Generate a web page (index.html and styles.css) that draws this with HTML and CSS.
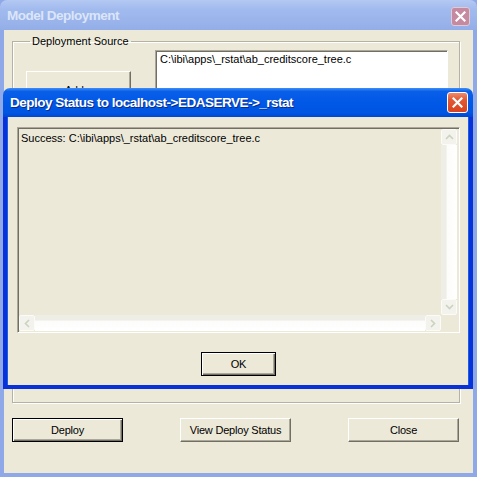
FILE: index.html
```html
<!DOCTYPE html>
<html lang="en">
	<head>
		<meta charset="UTF-8" />
		<title>Model Deployment</title>
		<link rel="stylesheet" href="styles.css">
	</head>
	<body>
		<div class="window">
			<div class="titlebar">
				<span class="title">Model Deployment</span>
				<span class="close-btn inactive">
					<svg width="11" height="11" viewBox="0 0 11 11"><path d="M1.5 1.5 L9.5 9.5 M9.5 1.5 L1.5 9.5" stroke="#fff" stroke-width="2.2" stroke-linecap="square"/></svg>
				</span>
			</div>
			<div class="client">
				<fieldset class="group">
					<legend>Deployment Source</legend>
					<div class="group-row">
						<button class="button add">Add...</button>
						<div class="path-box">C:\ibi\apps\_rstat\ab_creditscore_tree.c</div>
					</div>
				</fieldset>
				<div class="actions">
					<button class="button default">Deploy</button>
					<button class="button">View Deploy Status</button>
					<button class="button">Close</button>
				</div>
			</div>

			<div class="dialog">
				<div class="dialog-titlebar">
					<span class="dialog-title">Deploy Status to localhost-&gt;EDASERVE-&gt;_rstat</span>
					<span class="close-btn active">
						<svg width="11" height="11" viewBox="0 0 11 11"><path d="M1.5 1.5 L9.5 9.5 M9.5 1.5 L1.5 9.5" stroke="#fff" stroke-width="2.2" stroke-linecap="square"/></svg>
					</span>
				</div>
				<div class="dialog-body">
					<div class="status-box">
						<div class="status-text">Success: C:\ibi\apps\_rstat\ab_creditscore_tree.c</div>
						<div class="vscroll">
							<div class="arrow up">
								<svg width="9" height="6" viewBox="0 0 9 6"><path d="M1 5 L4.5 1.5 L8 5" fill="none" stroke="#c8d4bf" stroke-width="1.6"/></svg>
							</div>
							<div class="vtrack"></div>
							<div class="arrow down">
								<svg width="9" height="6" viewBox="0 0 9 6"><path d="M1 1 L4.5 4.5 L8 1" fill="none" stroke="#c8d4bf" stroke-width="1.6"/></svg>
							</div>
						</div>
						<div class="hscroll">
							<div class="arrow left">
								<svg width="6" height="9" viewBox="0 0 6 9"><path d="M5 1 L1.5 4.5 L5 8" fill="none" stroke="#c8d4bf" stroke-width="1.6"/></svg>
							</div>
							<div class="htrack"></div>
							<div class="arrow right">
								<svg width="6" height="9" viewBox="0 0 6 9"><path d="M1 1 L4.5 4.5 L1 8" fill="none" stroke="#c8d4bf" stroke-width="1.6"/></svg>
							</div>
						</div>
						<div class="corner"></div>
					</div>
					<div class="ok-row">
						<button class="button default ok">OK</button>
					</div>
				</div>
			</div>
		</div>
	</body>
</html>
```

FILE: styles.css
```css
body {
	margin: 0;
	width: 477px;
	height: 477px;
	overflow: hidden;
	font-family: "Liberation Sans", Arial, sans-serif;
	font-size: 11px;
	color: #000;
}
.window {
	position: relative;
	width: 477px;
	height: 477px;
	display: flex;
	flex-direction: column;
	background-color: #8ea8e8;
}
.titlebar {
	height: 30px;
	display: flex;
	align-items: center;
	justify-content: space-between;
	padding: 0 7px 0 7px;
	background: linear-gradient(#b4c9f3, #a2bbee 30%, #9ab4eb 70%, #93ade8);
	border-radius: 7px 7px 0 0;
}
.title {
	font-weight: bold;
	font-size: 13.5px;
	letter-spacing: -0.5px;
	color: #dbe5f8;
}
.close-btn {
	width: 21px;
	height: 21px;
	box-sizing: border-box;
	display: flex;
	align-items: center;
	justify-content: center;
	border-radius: 3px;
}
.close-btn.inactive {
	width: 19px;
	height: 19px;
	margin-top: 2px;
	background-color: #c58aa0;
	border: 1px solid #e2c9d6;
}
.close-btn.active {
	margin-right: -1px;
	background: linear-gradient(#ee8a6c, #e25a36 35%, #d9431d);
	border: 1px solid #fff;
}
.client {
	flex: 1;
	margin: 0 4px 4px 4px;
	padding: 5px 13px 0 8px;
	background-color: #ece9d8;
	display: flex;
	flex-direction: column;
}
.group {
	margin: 0;
	padding: 2px 11px 0 13px;
	height: 368px;
	box-sizing: border-box;
	border: 1px solid #b5b2a5;
	box-shadow: inset 1px 1px #fff, 1px 1px #fff;
}
.group legend {
	margin-left: 4px;
	padding: 0 2px;
	line-height: 13px;
}
.group-row {
	display: flex;
	align-items: flex-start;
}
.button {
	font-family: "Liberation Sans", Arial, sans-serif;
	font-size: 11px;
	letter-spacing: -0.2px;
	color: #000;
	background-color: #ece9d8;
	border: 1px solid;
	border-color: #fff #716f64 #716f64 #fff;
	box-shadow: inset -1px -1px #aca899;
	padding: 0;
	height: 24px;
}
.button.default {
	border: 1px solid #000;
	box-shadow: inset 1px 1px #fff, inset -1px -1px #716f64, inset -2px -2px #aca899;
}
.button.add {
	width: 105px;
	height: 34px;
	margin-top: 21px;
	padding-top: 4px;
}
.path-box {
	margin-left: 24px;
	flex: 1;
	height: 90px;
	padding: 2px 4px;
	background-color: #fff;
	border: 1px solid;
	border-color: #aca899 #fff #fff #aca899;
	box-shadow: inset 1px 1px #716f64;
}
.actions {
	display: flex;
	justify-content: space-between;
	margin-top: 15px;
	padding-right: 1px;
}
.actions .button {
	width: 111px;
}

.dialog {
	position: absolute;
	left: 3px;
	top: 88px;
	width: 470px;
	height: 301px;
	display: flex;
	flex-direction: column;
}
.dialog-titlebar {
	height: 29px;
	display: flex;
	align-items: center;
	justify-content: space-between;
	padding: 0 6px 0 7px;
	border-radius: 7px 7px 0 0;
	background: linear-gradient(#3d8ef8, #0a5fe8 12%, #0058e6 50%, #0055e2 85%, #0046d3);
}
.dialog-title {
	font-weight: bold;
	font-size: 13.5px;
	letter-spacing: -0.5px;
	color: #fff;
	text-shadow: 1px 1px #0a2c8e;
}
.dialog-body {
	flex: 1;
	background-color: #ece9d8;
	border: 4px solid #0831d9;
	border-top: none;
	box-shadow: inset 1px 0 #1660e8, inset -1px 0 #1660e8;
	padding: 10px 9px 0 10px;
}
.status-box {
	height: 206px;
	box-sizing: border-box;
	display: grid;
	grid-template-columns: 1fr 16px;
	grid-template-rows: 1fr 16px;
	border: 1px solid;
	border-color: #aca899 #fff #fff #aca899;
	box-shadow: inset 1px 1px #716f64;
	padding: 1px 2px 1px 1px;
}
.status-text {
	padding: 3px 2px;
}
.vscroll {
	display: flex;
	flex-direction: column;
}
.vtrack {
	flex: 1;
	background: linear-gradient(90deg, #eeede6 0, #eeede6 30%, #fcfcfb 40%, #fff);
}
.hscroll {
	display: flex;
}
.htrack {
	flex: 1;
	background: linear-gradient(#eeede6 0, #eeede6 30%, #fcfcfb 40%, #fff);
}
.arrow {
	width: 16px;
	height: 16px;
	box-sizing: border-box;
	display: flex;
	align-items: center;
	justify-content: center;
	background-color: #f3f2ec;
	border: 1px solid #fbfbf8;
	border-radius: 2px;
}
.corner {
	background-color: #ece9d8;
}
.ok-row {
	display: flex;
	justify-content: center;
	margin-top: 19px;
}
.button.ok {
	width: 75px;
	height: 24px;
}
```
